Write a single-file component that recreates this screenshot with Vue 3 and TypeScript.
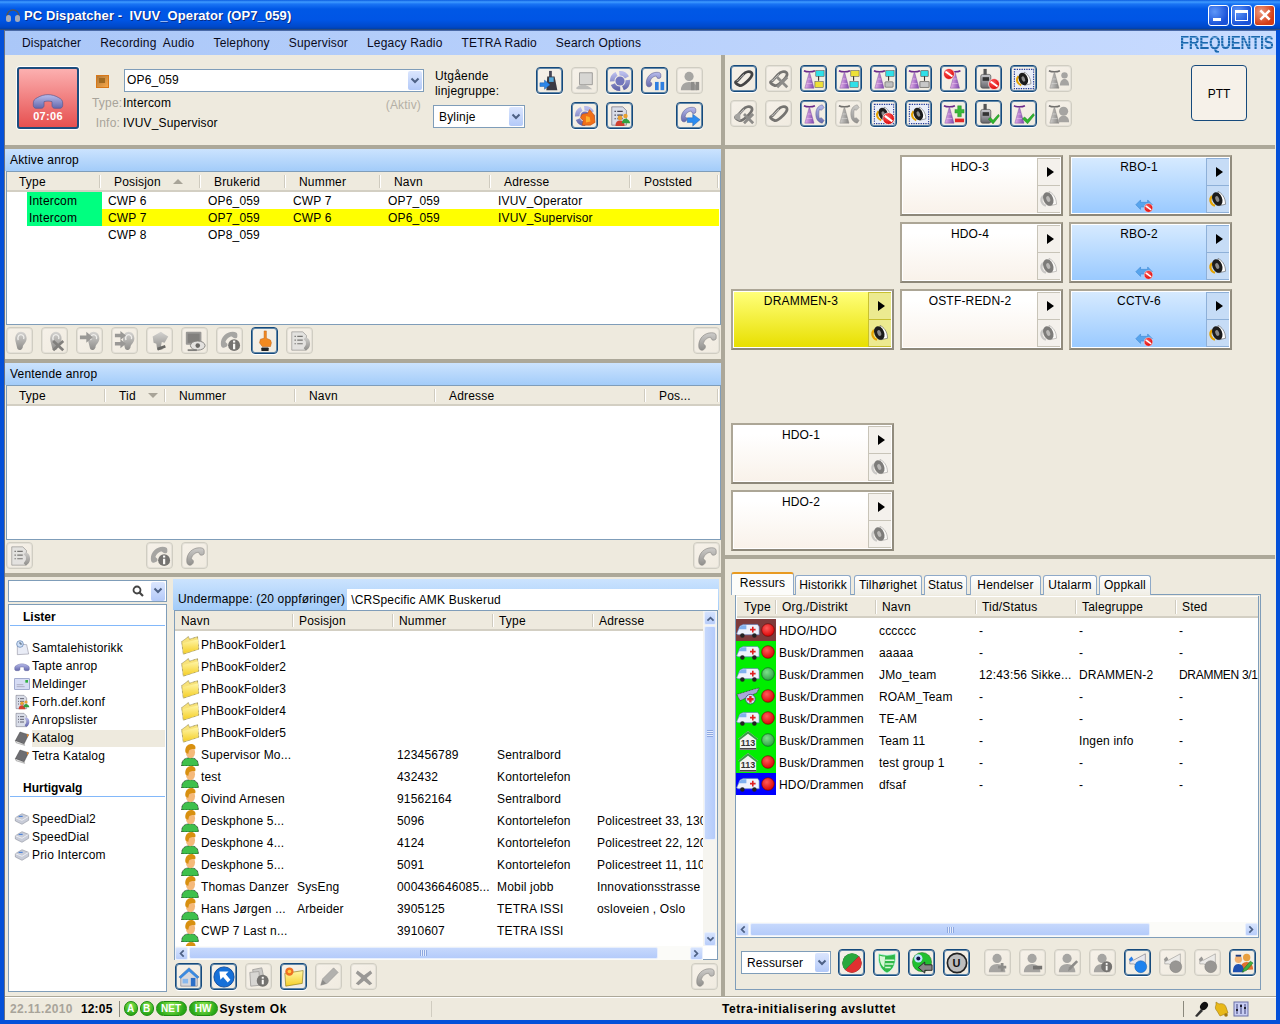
<script setup lang="ts">
interface Tool { i: string; on?: boolean }
const on = (i: string): Tool => ({ i, on: true })
const off = (i: string): Tool => ({ i })
const blank: Tool = { i: '' }

const windowTitle = 'PC Dispatcher -  IVUV_Operator (OP7_059)'
const menu = ['Dispatcher', 'Recording  Audio', 'Telephony', 'Supervisor', 'Legacy Radio', 'TETRA Radio', 'Search Options']

const callTools: Tool[] = [
  on('radioArrow'), off('pcPhone'), on('wheel'), on('phPause'), off('personPause'),
  blank, on('wheelFire'), on('docPeople'), blank, on('phForward'),
]
const radioTools: Tool[] = [
  on('chain'), off('chainX'), on('twCY'), on('twYC'), on('twCG'), on('twOut'), on('twNo'), on('radioNo'), on('spkBox'), off('twPerson'),
  off('chainX2'), off('chain2'), on('twPhone'), off('twPhone'), on('spkBoxNo'), on('spkBox'), on('twPlus'), on('radioOk'), on('twOk'), off('twPerson2'),
]
const activeTools: Tool[] = [
  off('ear'), off('earX'), off('earArrow'), off('earArrow2'), off('hand'), off('monEye'), off('phInfo'), on('finger'), off('docPhone'),
]
const waitTools: Tool[] = [off('docPhone'), blank, blank, blank, off('phInfo'), off('ph')]
const dirTools: Tool[] = [on('house'), on('upArrow'), off('docInfo'), on('folderNew'), off('pencil'), off('cross')]
const resTools: Tool[] = [on('redGreen'), on('shield'), on('eyeBack'), on('uBtn')]
const resTools2: Tool[] = [
  off('personPlus'), off('personMinus'), off('personPen'), off('personInfo'), on('mega'), off('mega'), off('mega'), on('peopleEdit'),
]

const activeRows = [
  { t: 'Intercom', c: ['CWP 6', 'OP6_059', 'CWP 7', 'OP7_059', 'IVUV_Operator', ''], hl: false },
  { t: 'Intercom', c: ['CWP 7', 'OP7_059', 'CWP 6', 'OP6_059', 'IVUV_Supervisor', ''], hl: true },
  { t: '', c: ['CWP 8', 'OP8_059', '', '', '', ''], hl: false },
]
const listItems = [
  { i: 'clockDoc', t: 'Samtalehistorikk' }, { i: 'hang', t: 'Tapte anrop' }, { i: 'mail', t: 'Meldinger' },
  { i: 'docPeople', t: 'Forh.def.konf' }, { i: 'docPhone', t: 'Anropslister' },
  { i: 'book', t: 'Katalog', sel: true }, { i: 'book', t: 'Tetra Katalog' },
]
const quick = ['SpeedDial2', 'SpeedDial', 'Prio Intercom']

const dirRows = [
  { i: 'folder', c: ['PhBookFolder1', '', '', '', ''] },
  { i: 'folder', c: ['PhBookFolder2', '', '', '', ''] },
  { i: 'folder', c: ['PhBookFolder3', '', '', '', ''] },
  { i: 'folder', c: ['PhBookFolder4', '', '', '', ''] },
  { i: 'folder', c: ['PhBookFolder5', '', '', '', ''] },
  { i: 'person', c: ['Supervisor Mo...', '', '123456789', 'Sentralbord', ''] },
  { i: 'person', c: ['test', '', '432432', 'Kontortelefon', ''] },
  { i: 'person', c: ['Oivind Arnesen', '', '91562164', 'Sentralbord', ''] },
  { i: 'person', c: ['Deskphone 5...', '', '5096', 'Kontortelefon', 'Policestreet 33, 1300 Sandvika'] },
  { i: 'person', c: ['Deskphone 4...', '', '4124', 'Kontortelefon', 'Policestreet 22, 1200 Sandvika'] },
  { i: 'person', c: ['Deskphone 5...', '', '5091', 'Kontortelefon', 'Policestreet 11, 1100 Sandvika'] },
  { i: 'person', c: ['Thomas Danzer', 'SysEng', '000436646085...', 'Mobil jobb', 'Innovationsstrasse 1, Wien'] },
  { i: 'person', c: ['Hans Jørgen ...', 'Arbeider', '3905125', 'TETRA ISSI', 'osloveien ,  Oslo'] },
  { i: 'person', c: ['CWP 7 Last n...', '', '3910607', 'TETRA ISSI', ''] },
  { i: 'person', c: ['', '', '', '', ''] },
]

const cards = [
  { n: 'HDO-3', r: 1, c: 2, k: 'w' }, { n: 'RBO-1', r: 1, c: 3, k: 'b' },
  { n: 'HDO-4', r: 2, c: 2, k: 'w' }, { n: 'RBO-2', r: 2, c: 3, k: 'b' },
  { n: 'DRAMMEN-3', r: 3, c: 1, k: 'y' }, { n: 'OSTF-REDN-2', r: 3, c: 2, k: 'w' }, { n: 'CCTV-6', r: 3, c: 3, k: 'b' },
  { n: 'HDO-1', r: 5, c: 1, k: 'w' }, { n: 'HDO-2', r: 6, c: 1, k: 'w' },
]
const tabs = [
  { t: 'Historikk', w: 56, g: 1 }, { t: 'Tilhørighet', w: 68, g: 3 }, { t: 'Status', w: 43, g: 2 },
  { t: 'Hendelser', w: 71, g: 3 }, { t: 'Utalarm', w: 54, g: 2 }, { t: 'Oppkall', w: 52, g: 2 },
]
const resRows = [
  { bg: 'brown', i: 'amb', led: 'ledR', c: ['HDO/HDO', 'cccccc', '-', '-', '-'] },
  { bg: 'green', i: 'amb', led: 'ledR', c: ['Busk/Drammen', 'aaaaa', '-', '-', '-'] },
  { bg: 'green', i: 'amb', led: 'ledG', c: ['Busk/Drammen', 'JMo_team', '12:43:56 Sikke...', 'DRAMMEN-2', 'DRAMMEN 3/1'] },
  { bg: 'green', i: 'plane', led: 'ledR', c: ['Busk/Drammen', 'ROAM_Team', '-', '-', '-'] },
  { bg: 'green', i: 'amb', led: 'ledR', c: ['Busk/Drammen', 'TE-AM', '-', '-', '-'] },
  { bg: 'green', i: 'st113', led: 'ledG', c: ['Busk/Drammen', 'Team 11', '-', 'Ingen info', '-'] },
  { bg: 'green', i: 'st113', led: 'ledR', c: ['Busk/Drammen', 'test group 1', '-', '-', '-'] },
  { bg: 'blue', i: 'amb', led: 'ledR', c: ['HDO/Drammen', 'dfsaf', '-', '-', '-'] },
]
</script>

<template>
  <div class="win">
    <svg class="defs" aria-hidden="true">
      <defs>
        <linearGradient id="gPh" x1="0" y1="0" x2="0" y2="1"><stop offset="0" stop-color="#b9bcec"/><stop offset="1" stop-color="#6468ac"/></linearGradient>
        <linearGradient id="gCone" x1="0" y1="0" x2="1" y2="0"><stop offset="0" stop-color="#e9b4ea"/><stop offset="1" stop-color="#7f48b0"/></linearGradient>
        <linearGradient id="gGrey" x1="0" y1="0" x2="0" y2="1"><stop offset="0" stop-color="#c8c8cc"/><stop offset="1" stop-color="#66666c"/></linearGradient>
        <linearGradient id="gFold" x1="0" y1="0" x2="0" y2="1"><stop offset="0" stop-color="#fff6a8"/><stop offset="1" stop-color="#f5cf28"/></linearGradient>
        <radialGradient id="gRed" cx=".4" cy=".35" r=".7"><stop offset="0" stop-color="#ff5a5a"/><stop offset="1" stop-color="#d80000"/></radialGradient>
        <radialGradient id="gGrn" cx=".4" cy=".35" r=".7"><stop offset="0" stop-color="#7de08a"/><stop offset="1" stop-color="#2aa040"/></radialGradient>
      </defs>
      <symbol id="ph" viewBox="0 0 24 24"><path fill="url(#gPh)" stroke="#55598f" stroke-width=".7" d="M3 17C3 9 9 3 17 3c3 0 5 1 5 3v3c0 2-4 3-5 1l-1-2c-4 0-7 3-8 7l2 2c1 2-1 5-3 5H6c-2 0-3-2-3-5z"/></symbol>
      <symbol id="hang" viewBox="0 0 24 24"><path fill="url(#gPh)" stroke="#55598f" stroke-width=".5" d="M1 15c0-2 1-3 3-4 5-3 11-3 16 0 2 1 3 2 3 4v2c0 1-1 2-2 2h-4c-1 0-2-1-2-2v-3c-2-.6-4-.6-6 0v3c0 1-1 2-2 2H3c-1 0-2-1-2-2z"/></symbol>
      <symbol id="chain" viewBox="0 0 24 24"><path fill="none" stroke="#444" stroke-width="3" d="M3 15c3-1 5-5 8-8 3-3 7-4 9-2s0 5-3 8-7 7-10 6-5-3-4-4z"/><path fill="none" stroke="#ccc" stroke-width="1" d="M4 14c3-1 5-5 8-7"/></symbol>
      <symbol id="chain2" viewBox="0 0 24 24"><use href="#chain"/></symbol>
      <symbol id="chainX" viewBox="0 0 24 24"><use href="#chain"/><path d="M10 10l11 11M21 10L10 21" stroke="#666" stroke-width="3"/></symbol>
      <symbol id="chainX2" viewBox="0 0 24 24"><use href="#chain"/><path d="M2 13l6-3v10l-6-3z" fill="#888"/><path d="M12 12l10 10M22 12L12 22" stroke="#666" stroke-width="3"/></symbol>
      <symbol id="tw" viewBox="0 0 24 24"><path d="M1 3c3 1.600 9 1.600 12 0" stroke="#6a2a8a" stroke-width="1.600" fill="none"/><path d="M7 4l5 18H2z" fill="url(#gCone)" stroke="#7a4aa0" stroke-width=".5"/><path d="M5 12h4M4 17h6" stroke="#f0d0f0" stroke-width=".6"/></symbol>
      <symbol id="twCY" viewBox="0 0 24 24"><use href="#tw"/><rect x="14" y="3" width="9" height="6" fill="#30e0e8" stroke="#333" stroke-width=".5"/><path d="M17 9v5" stroke="#333" stroke-width="1.200"/><rect x="13" y="15" width="9" height="6" fill="#eee038" stroke="#333" stroke-width=".5"/></symbol>
      <symbol id="twYC" viewBox="0 0 24 24"><use href="#tw"/><rect x="14" y="3" width="9" height="6" fill="#eee038" stroke="#333" stroke-width=".5"/><path d="M17 9v5" stroke="#333" stroke-width="1.200"/><rect x="13" y="15" width="9" height="6" fill="#30e0e8" stroke="#333" stroke-width=".5"/></symbol>
      <symbol id="twCG" viewBox="0 0 24 24"><use href="#tw"/><rect x="14" y="3" width="9" height="6" fill="#30e0e8" stroke="#333" stroke-width=".5"/><path d="M17 9v5" stroke="#333" stroke-width="1.200"/><rect x="13" y="15" width="9" height="6" rx="1" fill="#c0c0c0" stroke="#333" stroke-width=".5"/></symbol>
      <symbol id="twOut" viewBox="0 0 24 24"><use href="#tw"/><rect x="14" y="3" width="8" height="6" fill="#30e0e8" stroke="#333" stroke-width=".6"/><path d="M18 9v5" stroke="#333" stroke-width="1.200"/><rect x="13" y="15" width="10" height="6" fill="#c8c8c8" stroke="#333" stroke-width=".6"/></symbol>
      <symbol id="no" viewBox="0 0 24 24"><circle cx="12" cy="12" r="11" fill="url(#gRed)" stroke="#fff" stroke-width="1.400"/><path d="M5 7l14 10" stroke="#fff" stroke-width="4"/></symbol>
      <symbol id="ok" viewBox="0 0 24 24"><path d="M2 13l4-3 5 5L21 4l2 3-12 15z" fill="#2fb52f" stroke="#1a7a1a" stroke-width=".8"/></symbol>
      <symbol id="twNo" viewBox="0 0 24 24"><use href="#tw" x="6" y="0"/><use href="#no" x="0" y="0" width="13" height="13"/></symbol>
      <symbol id="radio" viewBox="0 0 24 24"><rect x="9" y="1" width="3.500" height="7" fill="#555"/><rect x="6" y="7" width="11" height="15" rx="2" fill="url(#gGrey)" stroke="#333" stroke-width=".6"/><rect x="8" y="10" width="7" height="4" fill="#333"/></symbol>
      <symbol id="radioNo" viewBox="0 0 24 24"><use href="#radio" x="-3"/><use href="#no" x="11" y="11" width="13" height="13"/></symbol>
      <symbol id="radioOk" viewBox="0 0 24 24"><use href="#radio" x="-3"/><use href="#ok" x="10" y="10" width="14" height="14"/></symbol>
      <symbol id="radioArrow" viewBox="0 0 24 24"><rect x="11" y="1" width="3" height="7" fill="#445"/><path d="M9 7h8l3 15H8z" fill="#3a3a44"/><rect x="11" y="8" width="5" height="5" fill="#5ad"/><path d="M1 14h5v-3l6 5-6 5v-3H1z" fill="#2c86e8" stroke="#1558a8" stroke-width=".5"/></symbol>
      <symbol id="spk" viewBox="0 0 24 24"><path d="M4 8c-4 5-2 11 4 13" fill="none" stroke="#e6a400" stroke-width="3"/><path d="M12 2c5 2 10 8 10 17l-9 2z" fill="#fff" stroke="#444" stroke-width=".7"/><ellipse cx="11" cy="12" rx="6.500" ry="9.500" fill="#1c1c1c" transform="rotate(-22 11 12)"/><ellipse cx="11" cy="12" rx="2.400" ry="4" fill="#8a8a8a" transform="rotate(-22 11 12)"/></symbol>
      <symbol id="spkBox" viewBox="0 0 24 24"><rect x="1.500" y="1.500" width="21" height="21" fill="#e9edf8" stroke="#223a9a" stroke-width="1.200" stroke-dasharray="1.400 1.200"/><use href="#spk" x="3" y="3" width="18" height="18"/></symbol>
      <symbol id="spkBoxNo" viewBox="0 0 24 24"><use href="#spkBox"/><use href="#no" x="10" y="10" width="14" height="14"/></symbol>
      <symbol id="twPerson" viewBox="0 0 24 24"><use href="#tw"/><circle cx="18" cy="8" r="3.500" fill="#888"/><path d="M13 19c0-5 3-7 5-7s5 2 5 7z" fill="#888"/></symbol>
      <symbol id="twPerson2" viewBox="0 0 24 24"><use href="#tw"/><circle cx="17" cy="9" r="5" fill="#888"/><path d="M11 21c0-5 3-7 6-7s6 2 6 7z" fill="#888"/></symbol>
      <symbol id="twPhone" viewBox="0 0 24 24"><use href="#tw"/><path d="M21 2c-5 1-7 5-7 10s2 9 7 10l2-3-3-3-2 1c-1-2-1-8 0-10l2 1 3-3z" fill="url(#gPh)" stroke="#55598f" stroke-width=".5"/></symbol>
      <symbol id="twPlus" viewBox="0 0 24 24"><use href="#tw"/><path d="M16 3h4v4h3v4h-3v4h-4v-4h-3V7h3z" fill="#38b838" stroke="#1d7a1d" stroke-width=".4"/><rect x="13" y="17" width="10" height="4" fill="#e02828"/></symbol>
      <symbol id="twOk" viewBox="0 0 24 24"><use href="#tw"/><use href="#ok" x="9" y="9" width="15" height="15"/></symbol>
      <symbol id="ear" viewBox="0 0 24 24"><path d="M7 12C6 6 9 2 13 2s7 4 6 9c-1 4-4 5-4 8-1 3-5 4-6 1z" fill="url(#gGrey)"/><path d="M10 11c-1-4 1-6 3-6s4 2 3 5" fill="none" stroke="#eee" stroke-width="1.400"/></symbol>
      <symbol id="earX" viewBox="0 0 24 24"><use href="#ear"/><path d="M10 12l11 10M21 12 10 22" stroke="#555" stroke-width="3"/></symbol>
      <symbol id="earArrow" viewBox="0 0 24 24"><use href="#ear" x="3"/><path d="M1 6h7V2l7 6-7 6v-4H1z" fill="#777"/></symbol>
      <symbol id="earArrow2" viewBox="0 0 24 24"><use href="#ear" x="3"/><path d="M1 4h6V1l6 5-6 5V8H1zM1 13h6v-3l6 5-6 5v-3H1z" fill="#777"/></symbol>
      <symbol id="hand" viewBox="0 0 24 24"><path d="M4 7l9-5 3 2 5 3-4 7-3-1-1 5 2 3-6 1-1-7-3-1z" fill="url(#gGrey)"/><rect x="9" y="18" width="9" height="3" transform="rotate(-20 13 19)" fill="#333"/></symbol>
      <symbol id="monEye" viewBox="0 0 24 24"><rect x="2" y="2" width="17" height="14" rx="1" fill="#777"/><rect x="4" y="4" width="13" height="10" fill="#555"/><ellipse cx="15" cy="17" rx="8" ry="5" fill="#ddd" stroke="#555"/><circle cx="15" cy="17" r="2.500" fill="#333"/><path d="M4 21h10v2H4z" fill="#555"/></symbol>
      <symbol id="phInfo" viewBox="0 0 24 24"><path fill="#888" d="M2 15C2 8 8 2 15 2c3 0 5 1 5 3v2c0 2-3 3-5 1l-1-1c-3 0-6 3-7 6l2 2c1 2-1 4-3 4-2 1-4 0-4-4z"/><circle cx="16.500" cy="16.500" r="6.500" fill="#444"/><rect x="15.300" y="15" width="2.400" height="6" fill="#fff"/><rect x="15.300" y="11.500" width="2.400" height="2.200" fill="#fff"/></symbol>
      <symbol id="finger" viewBox="0 0 24 24"><path d="M11 1h2.500v8l4.500 2 1 3-1 4H9l-3-4 1-4 4-1z" fill="#f38a20" stroke="#b8560a" stroke-width=".5"/><rect x="8" y="19" width="8" height="4" rx="1" fill="#222"/></symbol>
      <symbol id="docList" viewBox="0 0 24 24"><path d="M3 2h12l4 4v16H3z" fill="#d9dde8" stroke="#667" stroke-width=".7"/><path d="M6 7h1.500M9 7h6M6 11h1.500M9 11h6M6 15h1.500M9 15h6" stroke="#445" stroke-width="1.200"/></symbol>
      <symbol id="docPhone" viewBox="0 0 24 24"><use href="#docList"/><path d="M18 8c4 1 5 4 5 7s-2 7-5 7l-2-2 2-3c1-1 1-4 0-5l-2-2z" fill="url(#gPh)"/></symbol>
      <symbol id="docPeople" viewBox="0 0 24 24"><use href="#docList"/><circle cx="12" cy="14" r="2.600" fill="#e8a030"/><path d="M7 23c0-4 2-6 5-6s5 2 5 6z" fill="#d04030"/><circle cx="18" cy="12" r="2.400" fill="#e8a030"/><path d="M14 20c0-3 2-5 4-5s5 2 5 5z" fill="#30a040"/></symbol>
      <symbol id="pcPhone" viewBox="0 0 24 24"><path d="M6 3h14v13H6z" fill="#ccc" stroke="#777"/><path d="M2 20c2-3 5-4 8-4s7 2 10 5H4z" fill="#aaa"/></symbol>
      <symbol id="wheel" viewBox="0 0 24 24"><circle cx="12" cy="12" r="8.500" fill="none" stroke="url(#gPh)" stroke-width="5" stroke-dasharray="10 3"/><circle cx="12" cy="12" r="5" fill="#7276bc"/></symbol>
      <symbol id="wheelFire" viewBox="0 0 24 24"><use href="#wheel"/><path d="M9 10l6-1 2-4 5 6 1 8-5 3H9l1-5-3-3z" fill="#f07018" stroke="#c04000" stroke-width=".5"/><path d="M13 12l4 1 1 5-5 1z" fill="#ffb030"/></symbol>
      <symbol id="phPause" viewBox="0 0 24 24"><use href="#ph" width="20" height="20"/><rect x="12" y="13" width="4" height="9" fill="#2f7fe0"/><rect x="18" y="13" width="4" height="9" fill="#2f7fe0"/></symbol>
      <symbol id="personGr" viewBox="0 0 24 24"><circle cx="11" cy="7" r="5" fill="#888"/><path d="M2 22c0-6 4-9 9-9s9 3 9 9z" fill="#888"/></symbol>
      <symbol id="personPause" viewBox="0 0 24 24"><use href="#personGr"/><rect x="13" y="13" width="4" height="9" fill="#666"/><rect x="18" y="13" width="4" height="9" fill="#666"/></symbol>
      <symbol id="personPlus" viewBox="0 0 24 24"><use href="#personGr"/><path d="M15 12h3v3h3v3h-3v3h-3v-3h-3v-3h3z" fill="#666"/></symbol>
      <symbol id="personMinus" viewBox="0 0 24 24"><use href="#personGr"/><rect x="12" y="15" width="10" height="4" fill="#444"/></symbol>
      <symbol id="personPen" viewBox="0 0 24 24"><use href="#personGr"/><path d="M12 21l1-4 8-8 2 2-8 8z" fill="#666"/></symbol>
      <symbol id="personInfo" viewBox="0 0 24 24"><use href="#personGr"/><circle cx="16" cy="16" r="6" fill="#444"/><rect x="15" y="15" width="2" height="5" fill="#fff"/><rect x="15" y="12" width="2" height="2" fill="#fff"/></symbol>
      <symbol id="phForward" viewBox="0 0 24 24"><use href="#ph" width="20" height="20"/><path d="M9 14h6v-4l8 6-8 7v-4H9z" fill="#2c8cf0" stroke="#1558a8" stroke-width=".5"/></symbol>
      <symbol id="house" viewBox="0 0 24 24"><path d="M1 12 12 2l11 10-2 1v9H3v-9z" fill="#d8d8dc" stroke="#667" stroke-width=".6"/><path d="M1 12 12 2l11 10-2 2-9-8-9 8z" fill="#3a8ae0"/><rect x="14" y="13" width="5" height="9" fill="#2b6fc8"/><rect x="5" y="14" width="6" height="5" fill="#88b8ee"/></symbol>
      <symbol id="upArrow" viewBox="0 0 24 24"><circle cx="12" cy="12" r="11" fill="#1570d8" stroke="#0d4a9c"/><path d="M7 6h10l-3 3 5 6-3 3-5-6-3 3z" fill="#fff"/></symbol>
      <symbol id="docInfo" viewBox="0 0 24 24"><path d="M5 4l10-2 3 14-10 2z" fill="#bbb" stroke="#888"/><path d="M2 7l10-1 1 15-10 1z" fill="#ccc" stroke="#888"/><circle cx="16" cy="16" r="6.500" fill="#444"/><rect x="15" y="15" width="2.200" height="5" fill="#fff"/><rect x="15" y="11.800" width="2.200" height="2" fill="#fff"/></symbol>
      <symbol id="folder" viewBox="0 0 24 24"><path d="M2 8l8-6 1.500 3L21 2l1.500 15L4 23z" fill="#f7e27a" stroke="#6a5a18" stroke-width=".8" stroke-dasharray="1 .6"/><path d="M3 10l19-5-.5 12L4.500 22z" fill="url(#gFold)"/></symbol>
      <symbol id="folderNew" viewBox="0 0 24 24"><path d="M2 8l20-3-1 14-18 3z" fill="url(#gFold)" stroke="#8a7a20" stroke-width=".7"/><circle cx="7" cy="6" r="4.500" fill="#ee7022"/><circle cx="7" cy="6" r="2" fill="#ffd040"/></symbol>
      <symbol id="pencil" viewBox="0 0 24 24"><path d="M3 21l2-7L17 2l5 5L10 19z" fill="#999" stroke="#777" stroke-width=".6"/><path d="M3 21l2-6 4 4z" fill="#666"/></symbol>
      <symbol id="cross" viewBox="0 0 24 24"><path d="M5 5l7 5 7-5 2 3-6 5 6 6-3 2-6-5-6 5-3-2 6-6-6-5z" fill="#777"/></symbol>
      <symbol id="redGreen" viewBox="0 0 24 24"><circle cx="12" cy="12" r="10.500" fill="#333"/><path d="M4.500 19.500a10 10 0 0 1 15-15z" fill="#2aa83c"/><path d="M4.500 19.500a10 10 0 0 0 15-15z" fill="#e03030"/></symbol>
      <symbol id="shield" viewBox="0 0 24 24"><path d="M3 2c6 2 12 2 18 0 1 9-1 17-9 21C4 19 2 11 3 2z" fill="#30b848" stroke="#bfe" stroke-width=".8"/><path d="M4 4c4 1 5 1 6 1l-1 12C5 14 4 9 4 4z" fill="#d8f7d8"/><path d="M10 9h10M10 13h9M10 17h6" stroke="#d8f7d8" stroke-width="1.600"/></symbol>
      <symbol id="eyeBack" viewBox="0 0 24 24"><circle cx="12" cy="11" r="10.500" fill="#20c030" stroke="#206020" stroke-width=".5"/><circle cx="8" cy="7" r="4.500" fill="#bfe4ff"/><circle cx="8" cy="7" r="2.200" fill="#114"/><path d="M8 17l7-6v3h8v6h-8v3z" fill="#888" stroke="#222" stroke-width="1"/></symbol>
      <symbol id="uBtn" viewBox="0 0 24 24"><circle cx="12" cy="12" r="10.500" fill="#bdbdbd" stroke="#222" stroke-width="1.800"/></symbol>
      <symbol id="mega" viewBox="0 0 24 24"><path d="M3 9h4L20 2v15L7 13H3z" fill="#e8e8ee" stroke="#667" stroke-width=".6"/><path d="M2 8l3-3 2 3-3 3z" fill="#2c80e8"/><circle cx="15" cy="16" r="6.500" fill="#1e82ee" stroke="#0d55a8" stroke-width=".5"/></symbol>
      <symbol id="peopleEdit" viewBox="0 0 24 24"><circle cx="16" cy="6" r="4" fill="#e8a040"/><path d="M9 20c0-6 3-9 7-9s7 3 7 8z" fill="#e07030"/><circle cx="7" cy="8" r="4" fill="#f0b070"/><path d="M4 5h6V3H4z" fill="#1a3a80"/><path d="M1 22c0-6 2-9 6-9s6 3 6 9z" fill="#1e50b0"/><path d="M11 22l2-4 7-8 3 2-7 8z" fill="#40b040" stroke="#186018" stroke-width=".5"/></symbol>
      <symbol id="clockDoc" viewBox="0 0 24 24"><path d="M5 6l14 1 3 14-17 1z" fill="#e9ecf6" stroke="#778" stroke-width=".7"/><circle cx="9" cy="6" r="5" fill="#cfe0f8" stroke="#5577a8"/><path d="M9 3v3h3" stroke="#234" fill="none"/></symbol>
      <symbol id="mail" viewBox="0 0 24 24"><rect x="1" y="4" width="22" height="16" fill="#d6dcf4" stroke="#7a86b8"/><path d="M4 13h10M4 16h12" stroke="#99a"/><rect x="17" y="6" width="4" height="4" fill="#30b040"/></symbol>
      <symbol id="book" viewBox="0 0 24 24"><path d="M2 16 9 3l13 4-7 14z" fill="#6e6e72" stroke="#333" stroke-width=".6"/><path d="M2 16l13 5 1 2-13-4z" fill="#eee" stroke="#555" stroke-width=".6"/><path d="M19 6l3 1-2 4z" fill="#f08820"/></symbol>
      <symbol id="key" viewBox="0 0 24 24"><path d="M2 10 12 4l10 4v6l-10 6-10-5z" fill="#c8ccd8" stroke="#777b88" stroke-width=".7"/><path d="M2 10l10 4 10-6" fill="none" stroke="#fff" stroke-width="1"/><path d="M7 8h6" stroke="#2b6fd8" stroke-width="1.400"/></symbol>
      <symbol id="person" viewBox="0 0 20 24"><path d="M1 24c-.5-6 3-9 9-9s9.500 3 9 9z" fill="#3fc04c" stroke="#111" stroke-width=".8" stroke-dasharray="1 .6"/><ellipse cx="10.500" cy="9" rx="5" ry="6.500" fill="#f5b97a"/><path d="M5 9C4 3 8 0 11 0c4 0 6 3 4.500 6-2-1-5 0-6.500 1l-1 4z" fill="#d89010"/></symbol>
      <symbol id="amb" viewBox="0 0 30 22"><path d="M1 15l4-9 4-2h18l2 3v10H2z" fill="#eef2fb" stroke="#5878b8" stroke-width=".8"/><path d="M5 7l3-2h5v5H3z" fill="#7fb0ee"/><path d="M20 7h2v2.500h2.500v2H22V14h-2v-2.500h-2.500v-2H20z" fill="#e02020"/><circle cx="8" cy="18" r="2.800" fill="#222"/><circle cx="23" cy="18" r="2.800" fill="#222"/></symbol>
      <symbol id="plane" viewBox="0 0 30 22"><path d="M1 9l23-7 5-1-3 6L5 17z" fill="#a8a8d8" stroke="#222" stroke-width=".8" stroke-dasharray="1.200 .8"/><circle cx="18" cy="15" r="6" fill="#cfe4fa" stroke="#447"/><path d="M16.500 11h3v2.500h2.500v3h-2.500v2.500h-3v-2.500H14v-3h2.500z" fill="#e02020"/></symbol>
      <symbol id="st113" viewBox="0 0 24 22"><path d="M1 10 12 1l11 9-2 0v12H3V10z" fill="#f2f2f2"/><path d="M1 10 12 1l11 9-2 1-9-7-9 7z" fill="#3a9a48"/><rect x="3" y="20" width="18" height="1.500" fill="#222"/></symbol>
      <symbol id="ledR" viewBox="0 0 14 14"><circle cx="7" cy="7" r="6.300" fill="url(#gRed)" stroke="#600" stroke-width=".6"/></symbol>
      <symbol id="ledG" viewBox="0 0 14 14"><circle cx="7" cy="7" r="6.300" fill="url(#gGrn)" stroke="#106020" stroke-width=".7"/></symbol>
      <symbol id="chev" viewBox="0 0 10 8"><path d="M1.500 1.500 5 5l3.500-3.500" fill="none" stroke="#4d6185" stroke-width="2"/></symbol>
    </svg>

    <header class="title">
      <svg class="ticon" viewBox="0 0 16 16"><path d="M2 9C2 4 5 2 8 2s6 2 6 7" fill="none" stroke="#555" stroke-width="1.500"/><rect x="1" y="7" width="5" height="7" rx="2.500" fill="#a8acb8"/><rect x="10" y="7" width="5" height="7" rx="2.500" fill="#a8acb8"/></svg>
      <span class="ttext">{{ windowTitle }}</span>
      <span class="wbtns">
        <span class="wb"><i class="wmin"></i></span>
        <span class="wb"><i class="wmax"></i></span>
        <span class="wb close"><svg viewBox="0 0 12 12"><path d="M2 2l8 8M10 2l-8 8" stroke="#fff" stroke-width="2.200"/></svg></span>
      </span>
    </header>

    <div class="frame">
      <nav class="menu">
        <span v-for="m in menu" :key="m" class="mi">{{ m }}</span>
        <span class="logo">FREQUENTIS</span>
      </nav>

      <div class="body">
        <div class="left">
          <section class="ctl">
            <div class="hangup">
              <svg class="hicon"><use href="#hang"/></svg>
              <b>07:06</b>
            </div>
            <div class="call">
              <div class="callrow">
                <span class="oicon"><i></i></span>
                <div class="combo wide"><span class="up1">OP6_059</span><span class="dd"><svg><use href="#chev"/></svg></span></div>
              </div>
              <div class="inforow"><span class="lb">Type:</span><span class="val">Intercom</span><span class="aktiv">(Aktiv)</span></div>
              <div class="inforow"><span class="lb">Info:</span><span class="val">IVUV_Supervisor</span></div>
            </div>
            <div class="linegroup">
              <div class="lgtext">Utgående<br>linjegruppe:</div>
              <div class="combo lgcombo"><span>Bylinje</span><span class="dd"><svg><use href="#chev"/></svg></span></div>
            </div>
            <div class="tools five">
              <template v-for="(t, n) in callTools" :key="n">
                <button v-if="t.i" type="button" class="tb" :class="{ on: t.on }"><svg class="ic"><use :href="'#' + t.i"/></svg></button>
                <span v-else></span>
              </template>
            </div>
          </section>
          <div class="hs"></div>

          <section class="calls">
            <h2 class="bandhead">Aktive anrop</h2>
            <div class="tbox">
              <div class="thead ah">
                <span>Type</span><span>Posisjon<i class="sort"></i></span><span>Brukerid</span><span>Nummer</span><span>Navn</span><span>Adresse</span><span>Poststed</span>
              </div>
              <div v-for="(r, n) in activeRows" :key="n" class="arow" :class="{ hl: r.hl }">
                <span class="pad"></span>
                <span class="kind" :class="{ ic2: r.t }">{{ r.t }}</span>
                <span v-for="(c, k) in r.c" :key="k" class="acell">{{ c }}</span>
              </div>
            </div>
            <div class="callbar">
              <button v-for="t in activeTools" :key="t.i" type="button" class="tb" :class="{ on: t.on }"><svg class="ic"><use :href="'#' + t.i"/></svg></button>
              <button type="button" class="tb last"><svg class="ic"><use href="#ph"/></svg></button>
            </div>
          </section>
          <div class="hs"></div>

          <section class="calls">
            <h2 class="bandhead">Ventende anrop</h2>
            <div class="tbox">
              <div class="thead vh">
                <span>Type</span><span>Tid<i class="sort dn"></i></span><span>Nummer</span><span>Navn</span><span>Adresse</span><span>Pos...</span>
              </div>
            </div>
            <div class="callbar short">
              <template v-for="(t, n) in waitTools" :key="n">
                <button v-if="t.i" type="button" class="tb"><svg class="ic"><use :href="'#' + t.i"/></svg></button>
                <span v-else class="tbgap"></span>
              </template>
              <button type="button" class="tb last"><svg class="ic"><use href="#ph"/></svg></button>
            </div>
          </section>
          <div class="hs"></div>

          <section class="book">
            <aside class="side">
              <div class="search">
                <svg class="lens" viewBox="0 0 12 12"><circle cx="5" cy="5" r="3.500" fill="#fff" stroke="#444" stroke-width="1.800"/><path d="M7.500 7.500l3.500 3.500" stroke="#444" stroke-width="2.200"/></svg>
                <span class="dd"><svg><use href="#chev"/></svg></span>
              </div>
              <div class="lists">
                <div class="shead">Lister</div>
                <ul class="sl">
                  <li v-for="l in listItems" :key="l.t"><svg class="si"><use :href="'#' + l.i"/></svg><span :class="{ sel: l.sel }">{{ l.t }}</span></li>
                </ul>
                <div class="shead q">Hurtigvalg</div>
                <ul class="sl q2">
                  <li v-for="q in quick" :key="q"><svg class="si"><use href="#key"/></svg><span>{{ q }}</span></li>
                </ul>
              </div>
            </aside>

            <div class="dir">
              <div class="dirhead">
                <span>Undermappe: (20 oppføringer)</span>
                <div class="path">\CRSpecific AMK Buskerud</div>
              </div>
              <div class="dirbox">
                <div class="dirmain">
                  <div class="thead dh">
                    <span>Navn</span><span>Posisjon</span><span>Nummer</span><span>Type</span><span>Adresse</span>
                  </div>
                  <div class="dirrows">
                    <div v-for="(r, n) in dirRows" :key="n" class="drow">
                      <span class="dname"><svg class="di"><use :href="'#' + r.i"/></svg>{{ r.c[0] }}</span>
                      <span v-for="k in 4" :key="k" class="dcell">{{ r.c[k] }}</span>
                    </div>
                  </div>
                </div>
                <div class="vbar">
                  <span class="sbtn"><svg class="up"><use href="#chev"/></svg></span>
                  <span class="vthumb"><i></i></span>
                  <span class="sbtn end"><svg><use href="#chev"/></svg></span>
                </div>
                <div class="hbar">
                  <span class="sbtn"><svg class="lf"><use href="#chev"/></svg></span>
                  <span class="hthumb dirth"><i></i></span>
                  <span class="sbtn end"><svg class="rt"><use href="#chev"/></svg></span>
                </div>
              </div>
              <div class="dirbar">
                <button v-for="t in dirTools" :key="t.i" type="button" class="tb" :class="{ on: t.on }"><svg class="ic"><use :href="'#' + t.i"/></svg></button>
                <button type="button" class="tb last"><svg class="ic"><use href="#ph"/></svg></button>
              </div>
            </div>
          </section>
        </div>

        <div class="vs"></div>

        <div class="right">
          <section class="radio">
            <div class="tools ten">
              <button v-for="(t, n) in radioTools" :key="n" type="button" class="tb" :class="{ on: t.on }"><svg class="ic"><use :href="'#' + t.i"/></svg></button>
            </div>
            <button type="button" class="ptt">PTT</button>
          </section>
          <div class="hs"></div>

          <section class="cards">
            <div v-for="c in cards" :key="c.n" class="card" :class="c.k" :style="{ gridRow: c.r, gridColumn: c.c }">
              <div class="cmain">
                <span>{{ c.n }}</span>
                <svg v-if="c.k === 'b'" class="cbadge" viewBox="0 0 24 18"><path d="M1 8l6-6v3h9V2l6 6-6 6v-3H7v3z" fill="#58a4ec" stroke="#2f7dcc" stroke-width=".6"/><use href="#no" x="11" y="6" width="12" height="12"/></svg>
              </div>
              <div class="cside">
                <span class="cs"><i class="tri"></i></span>
                <span class="cs"><svg class="cspk" :class="{ gr: c.k === 'w' }"><use href="#spk"/></svg></span>
              </div>
            </div>
          </section>
          <div class="hs"></div>

          <section class="res">
            <div class="tabs">
              <span class="tab act">Ressurs</span>
              <span v-for="t in tabs" :key="t.t" class="tab" :style="{ width: t.w + 'px', marginLeft: t.g + 'px' }">{{ t.t }}</span>
            </div>
            <div class="tpanel">
              <div class="rbox">
                <div class="thead rh">
                  <span>Type</span><span>Org./Distrikt</span><span>Navn</span><span>Tid/Status</span><span>Talegruppe</span><span>Sted</span>
                </div>
                <div class="rrows">
                  <div v-for="(r, n) in resRows" :key="n" class="rrow">
                    <span class="rtype" :class="r.bg">
                      <span class="rico"><svg class="ramb"><use :href="'#' + r.i"/></svg><b v-if="r.i === 'st113'" class="n113">113</b></span>
                      <svg class="rled"><use :href="'#' + r.led"/></svg>
                    </span>
                    <span v-for="(c, k) in r.c" :key="k" class="rcell">{{ c }}</span>
                  </div>
                </div>
                <div class="hbar">
                  <span class="sbtn"><svg class="lf"><use href="#chev"/></svg></span>
                  <span class="hthumb resth"><i></i></span>
                  <span class="sbtn end"><svg class="rt"><use href="#chev"/></svg></span>
                </div>
              </div>
              <div class="resbar">
                <div class="combo rescombo"><span>Ressurser</span><span class="dd"><svg><use href="#chev"/></svg></span></div>
                <button v-for="t in resTools" :key="t.i" type="button" class="tb on ub">
                  <svg class="ic"><use :href="'#' + t.i"/></svg>
                  <b v-if="t.i === 'uBtn'">U</b>
                </button>
                <span class="rgap"></span>
                <button v-for="(t, n) in resTools2" :key="n" type="button" class="tb" :class="{ on: t.on }"><svg class="ic"><use :href="'#' + t.i"/></svg></button>
              </div>
            </div>
          </section>
        </div>
      </div>

      <footer class="status">
        <span class="date">22.11.2010</span>
        <span class="clock">12:05</span>
        <span class="sep"></span>
        <span class="pill c">A</span>
        <span class="pill c">B</span>
        <span class="pill net">NET</span>
        <span class="pill hw">HW</span>
        <span class="sys">System Ok</span>
        <span class="sep2"></span>
        <span class="msg">Tetra-initialisering avsluttet</span>
        <span class="sep3"></span>
        <svg class="sico" viewBox="0 0 16 16"><path d="M2 15l6-7 2 2-6 6z" fill="#333"/><ellipse cx="11" cy="5" rx="3.500" ry="4.500" fill="#111" transform="rotate(40 11 5)"/></svg>
        <svg class="sico" viewBox="0 0 16 16"><path d="M3 1l3 2c3-1 6 0 7 3l2 6-8 3-3-5c-2-2-2-4-1-6z" fill="#e8b818" stroke="#a07810" stroke-width=".6"/><circle cx="13" cy="14" r="1.800" fill="#a07810"/></svg>
        <svg class="sico" viewBox="0 0 16 16"><rect x="1" y="1" width="14" height="14" fill="#c8cdf2" stroke="#6a70a8"/><path d="M4 3v10M8 3v10M12 3v10" stroke="#3a3f78"/><path d="M3 9h2M7 5h2M11 7h2" stroke="#223" stroke-width="2"/></svg>
      </footer>
    </div>
  </div>
</template>

<style>
html, body { margin: 0; padding: 0; background: #0054e3; }
</style>

<style scoped>
.win { width: 1280px; height: 1024px; display: flex; flex-direction: column; overflow: hidden; font: 12px "Liberation Sans", Arial, sans-serif; color: #000; background: #0450d8; letter-spacing: .18px; }
.defs { position: absolute; width: 0; height: 0; }

.title { height: 30px; flex: none; display: flex; align-items: center; padding-left: 5px; box-sizing: border-box; color: #fff; background: linear-gradient(#0a5ce0 0, #3f9bff 2px, #1a74f4 4px, #0058e6 9px, #0055e5 20px, #0048c8 27px, #0040a8 29px, #555 30px); }
.ticon { width: 16px; height: 16px; margin-top: 2px; }
.ttext { margin-left: 3px; font-weight: 700; font-size: 13px; white-space: pre; letter-spacing: .09px; text-shadow: 1px 1px 0 #0a2a80; margin-top: 1px; }
.wbtns { margin-left: auto; display: flex; gap: 2px; padding-right: 5px; }
.wb { width: 21px; height: 21px; box-sizing: border-box; border: 1px solid #fff; border-radius: 3px; background: radial-gradient(circle at 30% 30%, #5f97f8, #1a52d8 70%); display: flex; align-items: center; justify-content: center; }
.wb.close { background: radial-gradient(circle at 30% 30%, #ec9a80, #d43c14 70%); }
.wb.close svg { width: 14px; height: 14px; }
.wmin { width: 8px; height: 3px; background: #fff; margin-top: 8px; margin-right: 4px; }
.wmax { width: 13px; height: 11px; border: 1px solid #fff; border-top-width: 3px; box-sizing: border-box; }

.frame { flex: 1; display: flex; flex-direction: column; margin: 0 4px 4px; background: #eeeade; min-height: 0; box-shadow: inset 1px 0 0 #6a7080; }
.menu { height: 25px; flex: none; margin-left: 1px; box-sizing: border-box; padding: 0 0 1px 17px; display: flex; align-items: center; gap: 19px; background: linear-gradient(90deg, #aac7f8, #c8dbff); white-space: pre; border-top: 1px solid #4a6aa8; }
.mi { color: #0a0a1a; }
.logo { margin-left: auto; margin-right: 3px; font-weight: 700; font-size: 19px; letter-spacing: -.4px; color: transparent; background: repeating-linear-gradient(#1c68ae 0 2px, #5c9ad2 2px 3px); -webkit-background-clip: text; background-clip: text; transform: scaleX(.79); transform-origin: right center; }

.body { flex: 1; min-height: 0; display: grid; grid-template-columns: 716px 4px 551px; margin-left: 1px; }
.left, .right { display: flex; flex-direction: column; min-width: 0; min-height: 0; }
.hs { height: 4px; flex: none; background: #aca899; }
.vs { background: #aca899; }
.right .hs { margin-right: 1px; }

.ctl { height: 90px; flex: none; display: flex; box-sizing: border-box; padding: 12px 0 0 12px; }
.hangup { width: 62px; height: 62px; box-sizing: border-box; border: 2px solid #1d4d7d; border-radius: 3px; background: linear-gradient(#fcb0b0, #e65050); display: flex; flex-direction: column; align-items: center; color: #fff; box-shadow: 0 0 0 1px #fff; }
.hangup b { font-size: 11px; letter-spacing: .3px; margin-top: -5px; }
.hicon { width: 32px; height: 32px; margin-top: 14px; }
.call { width: 332px; margin-left: 13px; padding-top: 2px; }
.callrow { display: flex; align-items: center; height: 24px; }
.oicon { width: 13px; height: 13px; margin-left: 4px; box-sizing: border-box; background: linear-gradient(135deg, #b07838, #f8a848); border: 1px solid #d87818; display: flex; padding: 2px; }
.oicon i { width: 6px; height: 5px; background: #a06a20; }
.combo { display: flex; align-items: center; justify-content: space-between; box-sizing: border-box; background: #fff; border: 1px solid #7f9db9; padding: 0 1px 0 2px; height: 23px; }
.combo.wide { width: 300px; margin-left: 15px; align-self: flex-start; }
.up1 { margin-top: -2px; }
.dd { width: 14px; height: 19px; border-radius: 2px; background: linear-gradient(#dbe6fe, #b3c9f8); display: flex; align-items: center; justify-content: center; flex: none; }
.dd svg { width: 10px; height: 8px; }
.inforow { display: flex; align-items: center; height: 20px; }
.lb { width: 28px; text-align: right; color: #a8a49a; }
.val { margin-left: 3px; }
.aktiv { margin-left: auto; margin-right: 3px; color: #b4b0a6; margin-top: 4px; }
.linegroup { width: 92px; margin-left: 9px; padding-top: 2px; }
.lgtext { line-height: 15px; padding-left: 2px; }
.lgcombo { margin-top: 6px; width: 92px; }
.lgcombo span:first-child { padding-left: 3px; }
.tools { display: grid; gap: 8px; grid-auto-rows: 27px; }
.tools.five { grid-template-columns: repeat(5, 27px); margin-left: 11px; }
.tools.ten { grid-template-columns: repeat(10, 27px); }

.tb { width: 27px; height: 27px; padding: 0; box-sizing: border-box; border: 1px solid #d0cdc2; border-radius: 4px; background: linear-gradient(135deg, #f6f1e9, #f0ebe0); box-shadow: inset 0 0 0 1px #e4e1d8; display: flex; align-items: center; justify-content: center; position: relative; flex: none; }
.tb .ic { width: 22px; height: 22px; filter: grayscale(1) opacity(.72); }
.tb.on { border-color: #164a7c; box-shadow: inset 0 0 0 1px #5f86a8, 0 1px 0 #fff; }
.tb.on .ic { filter: none; }
.ub b { position: absolute; font-size: 11px; color: #111; }
.ptt { width: 56px; height: 56px; margin-left: 119px; box-sizing: border-box; border: 1px solid #164a7c; border-radius: 4px; background: #f6f1e9; font: 12px "Liberation Sans", Arial, sans-serif; padding: 2px 0 0; color: #000; }
.radio { height: 90px; flex: none; display: flex; box-sizing: border-box; padding: 10px 0 0 5px; }

.calls { height: 210px; flex: none; display: flex; flex-direction: column; }
.bandhead { margin: 0; height: 22px; flex: none; font: inherit; display: flex; align-items: center; padding-left: 5px; background: linear-gradient(#cbe3fe, #a3ccf9); }
.tbox { flex: 1; min-height: 0; margin-left: 1px; background: #fff; border: 1px solid #7f9db9; }
.thead { display: flex; height: 20px; background: #eeeade; border-bottom: 2px solid #d3cfc3; padding-top: 1px; box-sizing: border-box; }
.thead > span { display: flex; align-items: center; box-sizing: border-box; flex: none; position: relative; padding-left: 14px; }
.thead > span::after { content: ""; position: absolute; right: 0; top: 2px; bottom: 2px; width: 1px; background: #cfcbbf; box-shadow: 1px 0 0 #fff; }
.ah > span:nth-child(1) { width: 93px; padding-left: 12px; }
.ah > span:nth-child(2) { width: 100px; }
.ah > span:nth-child(3) { width: 85px; }
.ah > span:nth-child(4) { width: 95px; }
.ah > span:nth-child(5) { width: 110px; }
.ah > span:nth-child(6) { width: 140px; }
.ah > span:nth-child(7) { width: 88px; }
.vh > span:nth-child(1) { width: 98px; padding-left: 12px; }
.vh > span:nth-child(2) { width: 60px; }
.vh > span:nth-child(3) { width: 130px; }
.vh > span:nth-child(4) { width: 140px; }
.vh > span:nth-child(5) { width: 210px; }
.vh > span:nth-child(6) { width: 73px; }
.sort { width: 0; height: 0; border: 5px solid transparent; border-top: 0; border-bottom: 5px solid #a8a498; margin-left: 12px; }
.sort.dn { border-bottom: 0; border-top: 5px solid #a8a498; }
.arow { display: flex; height: 17px; align-items: center; margin-right: 1px; }
.pad { width: 20px; flex: none; }
.kind { width: 75px; height: 17px; line-height: 18px; padding-left: 2px; box-sizing: border-box; flex: none; }
.kind.ic2 { background: #00ff80; }
.acell { height: 17px; line-height: 18px; padding-left: 6px; box-sizing: border-box; flex: none; white-space: nowrap; }
.acell:nth-of-type(3) { width: 100px; }
.acell:nth-of-type(4) { width: 85px; }
.acell:nth-of-type(5) { width: 95px; }
.acell:nth-of-type(6) { width: 110px; }
.acell:nth-of-type(7) { width: 140px; }
.acell:nth-of-type(8) { width: 87px; }
.hl .acell { background: #ff0; }
.callbar { height: 34px; flex: none; display: flex; gap: 8px; box-sizing: border-box; padding: 2px 0 0 1px; }
.callbar.short { height: 33px; }
.tbgap { width: 27px; flex: none; }
.tb.last { margin-left: auto; margin-right: 1px; }

.book { flex: 1; min-height: 0; display: flex; }
.side { width: 159px; margin-left: 3px; padding-top: 3px; flex: none; display: flex; flex-direction: column; gap: 2px; box-sizing: content-box; height: 412px; }
.search { height: 22px; flex: none; box-sizing: border-box; background: #fff; border: 1px solid #7f9db9; display: flex; align-items: center; justify-content: flex-end; padding-right: 1px; gap: 7px; }
.lens { width: 12px; height: 12px; }
.lists { height: 388px; flex: none; box-sizing: border-box; background: #fff; border: 1px solid #7f9db9; }
.shead { margin: 0 1px 0 1px; padding-left: 13px; height: 21px; display: flex; align-items: center; font-weight: 700; border-bottom: 1px solid #82b8fa; box-sizing: border-box; padding-top: 3px; letter-spacing: 0; }
.shead.q { margin-top: 12px; height: 20px; }
.sl { list-style: none; margin: 13px 0 0; padding: 0 1px 0 5px; }
.sl.q2 { margin-top: 13px; }
.sl li { height: 18px; display: flex; align-items: center; gap: 2px; }
.si { width: 16px; height: 16px; flex: none; }
.sl li span { flex: 1; height: 17px; line-height: 17px; }
.sl li span.sel { background: #eeeade; }

.dir { width: 546px; margin-left: 6px; flex: none; display: flex; flex-direction: column; padding-top: 2px; }
.dirhead { height: 31px; flex: none; background: linear-gradient(#cbe3fe, #a3ccf9); display: flex; align-items: flex-end; padding-left: 5px; box-sizing: border-box; }
.dirhead > span { margin-bottom: 4px; }
.path { margin-left: 2px; flex: 1; height: 21px; background: #fff; display: flex; align-items: center; padding-left: 4px; margin-right: 1px; }
.dirbox { height: 350px; flex: none; margin-left: 1px; margin-right: 1px; box-sizing: border-box; border: 1px solid #7f9db9; display: grid; grid-template-columns: 528px 1fr; grid-template-rows: 335px 1fr; background: #fff; }
.dirmain { min-height: 0; overflow: hidden; display: flex; flex-direction: column; }
.dh > span { padding-left: 6px; }
.dh > span:nth-child(1) { width: 118px; }
.dh > span:nth-child(2), .dh > span:nth-child(3), .dh > span:nth-child(4) { width: 100px; }
.dh > span:nth-child(5) { width: 110px; }
.dh > span:nth-child(5)::after { display: none; }
.dirrows { flex: 1; overflow: hidden; margin-top: 3px; }
.drow { height: 22px; display: flex; align-items: center; }
.dname { width: 118px; display: flex; align-items: center; flex: none; white-space: nowrap; padding-left: 5px; box-sizing: border-box; }
.di { width: 20px; height: 22px; margin-right: 1px; flex: none; }
.dcell { flex: none; width: 100px; padding-left: 4px; box-sizing: border-box; white-space: nowrap; overflow: hidden; }
.dcell:last-child { width: 110px; }
.vbar { display: flex; flex-direction: column; padding: 0 1px; gap: 1px; background: #f6f5f0; }
.hbar { display: flex; background: #fbfbf8; height: 14px; padding: 1px 0; box-sizing: border-box; gap: 1px; }
.sbtn { width: 13px; height: 13px; flex: none; border-radius: 2px; background: linear-gradient(#d6e3fd, #b8cdfa); border: 1px solid #e8effd; box-sizing: border-box; display: flex; align-items: center; justify-content: center; }
.sbtn svg { width: 9px; height: 7px; }
.sbtn .up { transform: rotate(180deg); }
.sbtn .lf { transform: rotate(90deg); }
.sbtn .rt { transform: rotate(-90deg); }
.sbtn.end { margin-left: auto; }
.vbar .sbtn.end { margin-top: auto; margin-left: 0; }
.vbar .sbtn { width: 100%; height: 14px; }
.vthumb { height: 214px; flex: none; border-radius: 2px; background: linear-gradient(90deg, #c6d8fc, #b4cbfa); border: 1px solid #e8effd; box-sizing: border-box; display: flex; align-items: center; justify-content: center; }
.vthumb i { width: 6px; height: 7px; background: repeating-linear-gradient(#8ea8e0 0 1px, #e4ecfd 1px 2px); }
.hthumb { flex: none; border-radius: 2px; background: linear-gradient(#c6d8fc, #b4cbfa); border: 1px solid #e8effd; box-sizing: border-box; display: flex; align-items: center; justify-content: center; }
.hthumb i { width: 7px; height: 6px; background: repeating-linear-gradient(90deg, #8ea8e0 0 1px, #e4ecfd 1px 2px); }
.dirth { width: 469px; }
.resth { width: 400px; }
.dirbar { height: 36px; flex: none; display: flex; gap: 8px; padding: 3px 0 0 2px; box-sizing: border-box; }

.cards { height: 406px; flex: none; box-sizing: border-box; padding: 6px 0 0 6px; display: grid; grid-template-columns: repeat(3, 163px); grid-template-rows: repeat(6, 61px); gap: 6px; }
.card { display: flex; box-sizing: border-box; border: 2px solid; border-color: #aca696 #918c7e #8d887a #aca696; box-shadow: inset 0 0 0 1px #fff; padding: 1px; }
.cmain { flex: 1; display: flex; flex-direction: column; align-items: center; padding-top: 2px; position: relative; }
.card.w .cmain { background: linear-gradient(#fff 15%, #f9f2ea); }
.card.b .cmain { background: linear-gradient(#d6eaff, #9acaff); }
.card.y .cmain { background: linear-gradient(#ffff7a, #e8df00); }
.cbadge { position: absolute; left: 63px; top: 40px; width: 19px; height: 15px; }
.cside { width: 23px; display: flex; flex-direction: column; flex: none; }
.cs { flex: 1; display: flex; align-items: center; justify-content: center; box-sizing: border-box; border: 1px solid #c8c4b8; border-right-width: 0; }
.cs + .cs { border-top: 0; }
.card.w .cs { background: #f4f1ec; }
.card.b .cs { background: #c6dcf6; border-color: #8eb0d8; }
.card.y .cs { background: #ecea90; border-color: #c8c030; }
.tri { width: 0; height: 0; border: 5px solid transparent; border-left: 7px solid #000; border-right: 0; margin-left: 2px; }
.cspk { width: 18px; height: 18px; }
.cspk.gr { filter: grayscale(1) opacity(.55); }

.res { flex: 1; min-height: 0; box-sizing: border-box; padding: 13px 15px 0 6px; }
.tabs { display: flex; height: 23px; margin-bottom: -1px; align-items: flex-end; position: relative; z-index: 1; }
.tab { height: 20px; display: flex; align-items: center; justify-content: center; padding: 0 0 2px; background: linear-gradient(#fff, #f0eee6); border: 1px solid #8ea9c8; border-bottom: 0; border-radius: 3px 3px 0 0; box-sizing: border-box; }
.tab.act { width: 63px; height: 23px; padding-bottom: 4px; border-top: 2px solid #e89a20; background: #fcfcfa; }
.tpanel { height: 396px; margin-left: 4px; box-sizing: border-box; border: 1px solid #7f9db9; display: flex; flex-direction: column; }
.rbox { height: 342px; flex: none; margin: 1px 1px 0 0; box-sizing: border-box; border: 1px solid #7f9db9; border-width: 0 1px 1px 0; background: #fff; display: flex; flex-direction: column; }
.rh { height: 21px; flex: none; margin: 1px 0 0 1px; }
.rh > span { padding-left: 6px; width: 100px; }
.rh > span:first-child { width: 39px; padding-left: 7px; }
.rh > span:last-child::after { display: none; }
.rrows { flex: 1; min-height: 0; overflow: hidden; padding-top: 1px; }
.rrow { height: 22px; display: flex; align-items: center; }
.rtype { width: 40px; height: 22px; flex: none; display: flex; align-items: center; box-sizing: border-box; }
.rtype.brown { background: #7e3b3b; }
.rtype.green { background: #00ee00; }
.rtype.blue { background: #0000ff; }
.rico { position: relative; width: 24px; height: 20px; flex: none; display: flex; }
.ramb { width: 24px; height: 20px; flex: none; }
.n113 { position: absolute; left: 0; right: 0; bottom: 2px; text-align: center; font-size: 9px; line-height: 10px; letter-spacing: 0; color: #333; }
.rled { width: 14px; height: 14px; margin-left: 1px; flex: none; }
.rcell { width: 100px; height: 20px; line-height: 22px; flex: none; padding-left: 3px; box-sizing: border-box; white-space: nowrap; overflow: hidden; }
.rcell:last-child { width: 82px; letter-spacing: -.3px; }
.rbox .hbar { padding: 1px 0; height: 15px; }
.resbar { flex: 1; display: flex; align-items: center; gap: 8px; padding: 0 0 2px 5px; }
.rescombo { width: 90px; margin-right: -1px; }
.rescombo span:first-child { padding-left: 3px; }
.rgap { width: 0; margin-left: -2px; flex: none; }

.status { height: 24px; flex: none; display: flex; align-items: center; margin-left: 1px; box-sizing: border-box; border-top: 1px solid #aca899; box-shadow: inset 0 1px 0 #fff; padding-left: 5px; font-weight: 700; white-space: nowrap; }
.date { color: #a8a49a; letter-spacing: .35px; }
.clock { margin-left: 8px; }
.sep { width: 1px; height: 16px; background: #8a887c; margin: 0 2px 0 6px; }
.pill { height: 15px; background: radial-gradient(circle at 50% 30%, #90e850, #28a818 75%); border: 1px solid #1d8a10; color: #fff; font-size: 10px; display: flex; align-items: center; justify-content: center; box-sizing: border-box; border-radius: 8px; margin-left: 2px; letter-spacing: 0; }
.pill.c { width: 14px; }
.pill.net { width: 31px; }
.pill.hw { width: 29px; }
.sys { margin-left: 2px; letter-spacing: .6px; }
.sep2 { width: 1px; height: 16px; background: #d0ccc0; margin-left: 144px; }
.msg { margin-left: 290px; letter-spacing: .6px; }
.sep3 { width: 1px; height: 16px; background: #8a887c; margin-left: auto; margin-right: 9px; }
.sico { width: 16px; height: 16px; margin-right: 4px; }
.status .sico:last-child { margin-right: 27px; }
</style>
